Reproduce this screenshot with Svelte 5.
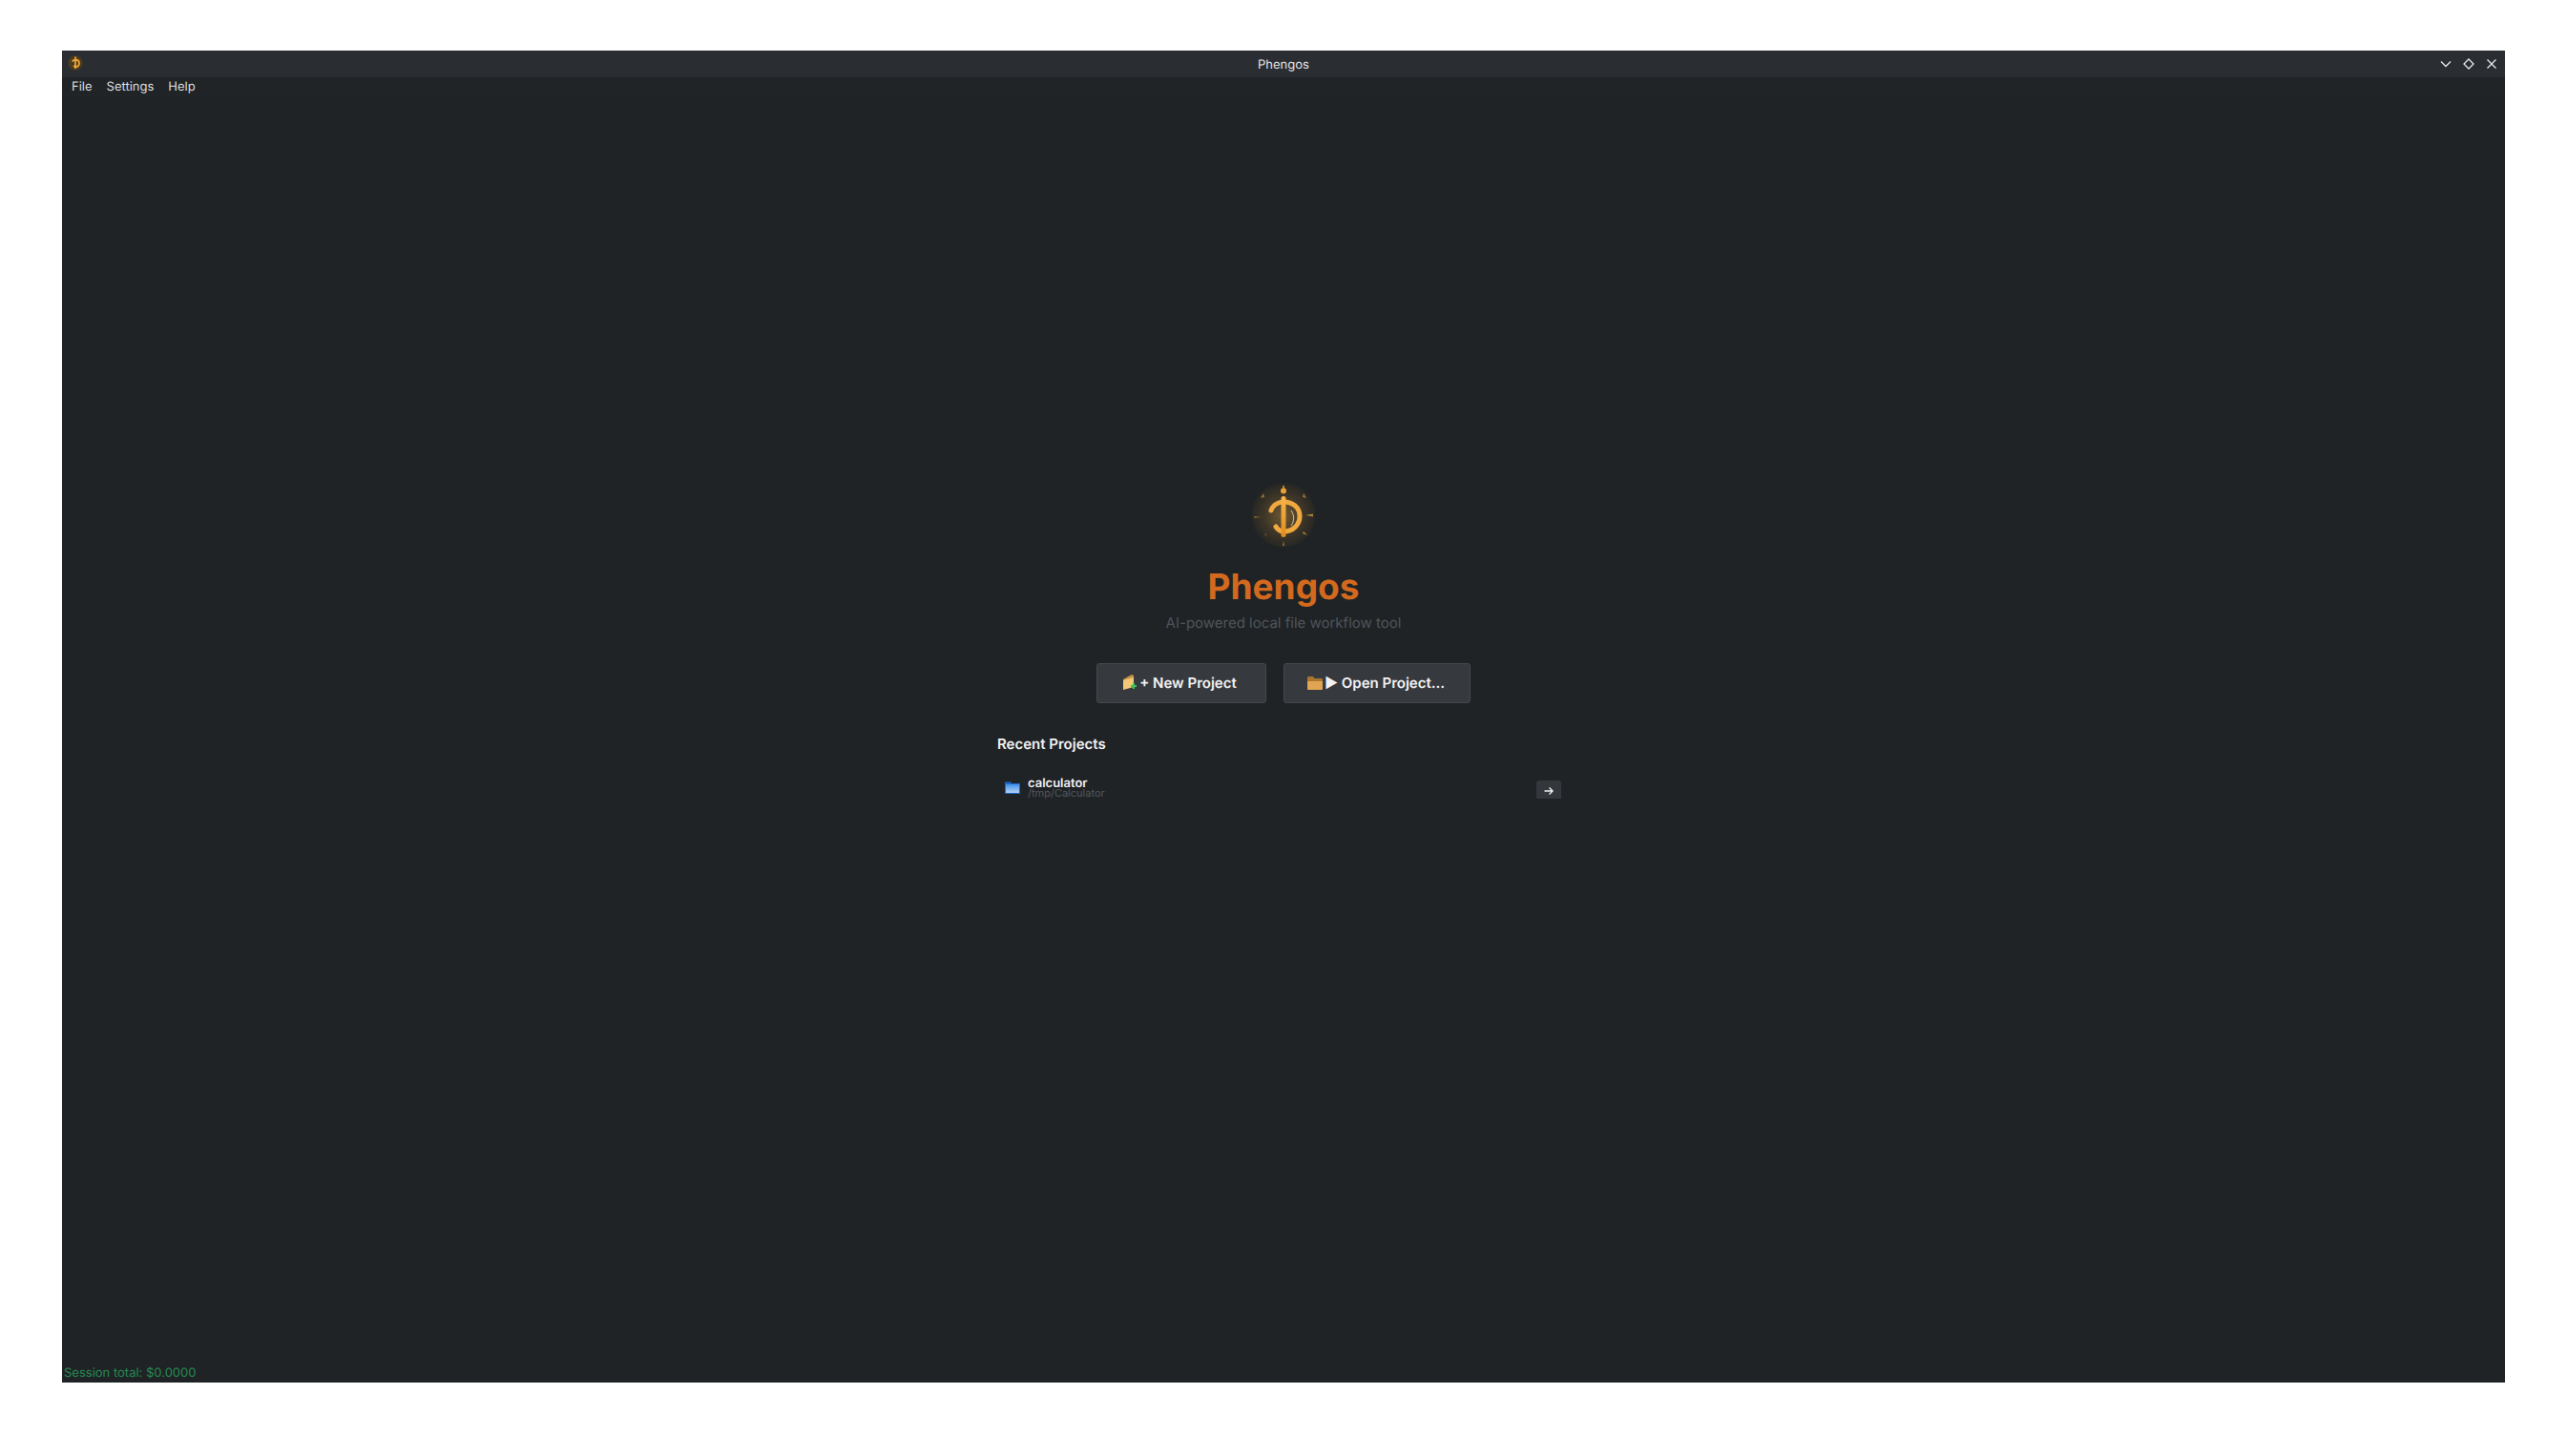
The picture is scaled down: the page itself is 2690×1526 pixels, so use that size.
<script lang="ts">
	const menus = ['File', 'Settings', 'Help'];
	const rays = [
		{ d: 'M-20,-19 L-24,-18 L-21,-23 Z', o: 0.6 },
		{ d: 'M20,-19 L24,-18 L21,-23 Z', o: 0.6 },
		{ d: 'M-23,2 L-31,3 L-31,1 Z', o: 0.45 },
		{ d: 'M23,0 L31,-1.5 L31,1.5 Z', o: 0.7 },
		{ d: 'M-17,23 L-19,19 L-20,20 Z', o: 0.4 },
		{ d: 'M20,19 L25,21 L21,17 Z', o: 0.75 },
		{ d: 'M-1.2,32 L1.2,32 L0,27 Z', o: 0.55 }
	];
</script>

<div class="window">
	<header class="titlebar">
		<svg class="app-icon" width="16" height="16" viewBox="-34 -34 68 68" aria-hidden="true">
			<circle r="33" fill="#4a3a1e" />
			<path d="M-13,-5 C-11,-11 -5,-14 0,-14 C10,-14 17,-8 17,1 C17,10 10,17 0,17 C-3,17 -6,15 -8,12" fill="none" stroke="#e8a030" stroke-width="8" />
			<path d="M0,-28 V26" stroke="#f0b040" stroke-width="7" />
		</svg>
		<span class="title">Phengos</span>
		<div class="controls">
			<svg width="12" height="12" viewBox="0 0 12 12"><path d="M1 3.5 L6 8.5 L11 3.5" /></svg>
			<svg width="12" height="12" viewBox="0 0 12 12"><path d="M6 1 L11 6 L6 11 L1 6 Z" /></svg>
			<svg width="12" height="12" viewBox="0 0 12 12"><path d="M1.5 1.5 L10.5 10.5 M10.5 1.5 L1.5 10.5" /></svg>
		</div>
	</header>

	<nav class="menubar">
		{#each menus as m}
			<span>{m}</span>
		{/each}
	</nav>

	<main class="welcome">
		<svg class="logo" width="68" height="68" viewBox="-34 -34 68 68" aria-hidden="true">
			<defs>
				<radialGradient id="halo">
					<stop offset="0" stop-color="#6f5932" />
					<stop offset="0.65" stop-color="#3c3427" />
					<stop offset="1" stop-color="#262724" />
				</radialGradient>
				<linearGradient id="gold" x1="0" y1="0" x2="0" y2="1">
					<stop offset="0" stop-color="#f7b64c" />
					<stop offset="1" stop-color="#e08c1f" />
				</linearGradient>
			</defs>
			<circle r="33.5" fill="url(#halo)" />
			{#each rays as r}
				<path d={r.d} fill="#d9a24a" opacity={r.o} />
			{/each}
			<circle cx="0" cy="-25.5" r="3" fill="#e9a038" />
			<path d="M0,-31 V-26" stroke="#e9a038" stroke-width="1.5" />
			<path d="M-13,-5 C-11,-11 -5,-14 0,-14 C10,-14 17,-8 17,1 C17,10 10,17 0,17 C-3,17 -6,15 -8,12" fill="none" stroke="#f0a93e" stroke-width="5" stroke-linecap="round" />
			<path d="M8,-5 C12,1 11,7 8,11" fill="none" stroke="#ffe2b0" stroke-width="0.8" />
			<rect x="-2.5" y="-20" width="5" height="43" rx="2.5" fill="url(#gold)" />
		</svg>

		<h1>Phengos</h1>
		<p class="tagline">AI-powered local file workflow tool</p>

		<div class="actions">
			<button class="new">
				<svg width="16" height="18" viewBox="0 0 16 18" aria-hidden="true">
					<path d="M1 6 L10 1 L12 2 V13 L1 16 Z" fill="#c99545" />
					<path d="M1 7 L12 4 V14 L1 17 Z" fill="#f2c878" />
					<rect x="9" y="12" width="6" height="2" fill="#35c759" />
					<rect x="11" y="10" width="2" height="6" fill="#35c759" />
				</svg>
				+ New Project
			</button>
			<button class="open">
				<svg width="16" height="15" viewBox="0 0 16 15" aria-hidden="true">
					<path d="M0 2 Q0 1 1 1 H6 L7.5 3 H15 Q16 3 16 4 V14 Q16 15 15 15 H1 Q0 15 0 14 Z" fill="#a9752f" />
					<path d="M0 6 H16 V14 Q16 15 15 15 H1 Q0 15 0 14 Z" fill="#e0a552" />
				</svg>
				▶ Open Project...
			</button>
		</div>

		<section class="recent">
			<h2>Recent Projects</h2>
			<div class="project">
				<svg class="folder" width="16" height="14" viewBox="0 0 16 14" aria-hidden="true">
					<defs>
						<linearGradient id="blue" x1="0" y1="0" x2="0" y2="1">
							<stop offset="0" stop-color="#3f8fe8" />
							<stop offset="1" stop-color="#b6d3f5" />
						</linearGradient>
					</defs>
					<path d="M0 1.5 H6 L7 3 H16 V14 H0 Z" fill="#1a66cc" />
					<rect x="1" y="4" width="14" height="9" fill="url(#blue)" />
				</svg>
				<div class="project-text">
					<span class="name">calculator</span>
					<span class="path">/tmp/Calculator</span>
				</div>
				<button class="go" aria-label="Open calculator">
					<svg width="10" height="10" viewBox="0 0 10 10"><path d="M0.5 5 H9 M5.5 1.5 L9 5 L5.5 8.5" /></svg>
				</button>
			</div>
		</section>
	</main>

	<footer class="status">Session total: $0.0000</footer>
</div>

<style>
	:global(body) {
		margin: 0;
		background: #fff;
	}

	.window {
		display: flex;
		flex-direction: column;
		width: 2560px;
		height: 1396px;
		margin: 53px 0 0 65px;
		background: #1f2326;
		color: #fff;
		font-family: Inter, 'Liberation Sans', sans-serif;
		text-rendering: geometricPrecision;
		overflow: hidden;
	}

	.titlebar {
		display: flex;
		align-items: center;
		justify-content: space-between;
		height: 28px;
		padding: 0 6px;
		flex: none;
		background: #2a2d32;
	}

	.app-icon {
		margin-top: -3px;
	}

	.title {
		padding-top: 1px;
		font-size: 13px;
		color: #e4e5e7;
		margin-left: 46px;
	}

	.controls {
		display: flex;
		gap: 12px;
		padding-right: 2px;
	}

	.controls path {
		fill: none;
		stroke: #e8e8e8;
		stroke-width: 1.3;
	}

	.menubar {
		display: flex;
		gap: 15px;
		height: 20px;
		align-items: center;
		padding: 0 0 0 10px;
		flex: none;
		font-size: 13px;
		color: #dcdddf;
		background: #202427;
		border-bottom: 1px solid #22262a;
		box-sizing: border-box;
	}

	.welcome {
		flex: 1;
		display: flex;
		flex-direction: column;
		align-items: center;
		padding-top: 405px;
	}

	.logo {
		flex: none;
	}

	h1 {
		margin: 18px 0 0;
		font-size: 37px;
		line-height: 45px;
		font-weight: 700;
		color: #d2691e;
	}

	.tagline {
		margin: 7px 0 0;
		font-size: 15px;
		line-height: 18px;
		color: #50545a;
	}

	.actions {
		display: flex;
		gap: 18px;
		margin-top: 33px;
	}

	.actions button {
		display: flex;
		align-items: center;
		justify-content: center;
		gap: 2px;
		height: 42px;
		padding: 0 0 2px;
		font: 600 15px Inter, 'Liberation Sans', sans-serif;
		text-rendering: geometricPrecision;
		color: #f2f2f2;
		background: #36393e;
		border: 1px solid #44474b;
		border-radius: 3px;
	}

	.actions .new {
		width: 178px;
		padding-right: 4px;
	}

	.actions .open {
		width: 196px;
		padding-right: 2px;
	}

	.recent {
		width: 600px;
		margin-top: 34px;
	}

	h2 {
		margin: 0;
		font-size: 15px;
		line-height: 18px;
		font-weight: 600;
		color: #f2f2f2;
	}

	.project {
		display: flex;
		align-items: center;
		gap: 8px;
		margin-top: 23px;
		padding: 0 9px 0 8px;
		height: 28px;
	}

	.folder {
		margin-top: -3px;
	}

	.project-text {
		flex: 1;
		display: flex;
		flex-direction: column;
	}

	.name {
		font-size: 13px;
		line-height: 10px;
		font-weight: 600;
		color: #f2f2f2;
	}

	.path {
		font-size: 11px;
		line-height: 10px;
		color: #54585d;
	}

	.go {
		display: flex;
		align-items: center;
		justify-content: center;
		width: 26px;
		height: 19px;
		margin-bottom: 3px;
		padding: 2px 0 0;
		align-self: flex-end;
		background: #34373b;
		border: none;
		border-radius: 3px 3px 0 0;
	}

	.go path {
		fill: none;
		stroke: #f0f0f0;
		stroke-width: 1.4;
	}

	.status {
		flex: none;
		padding: 0 2px 2px;
		font-size: 13px;
		line-height: 16px;
		color: #268a52;
	}
</style>
